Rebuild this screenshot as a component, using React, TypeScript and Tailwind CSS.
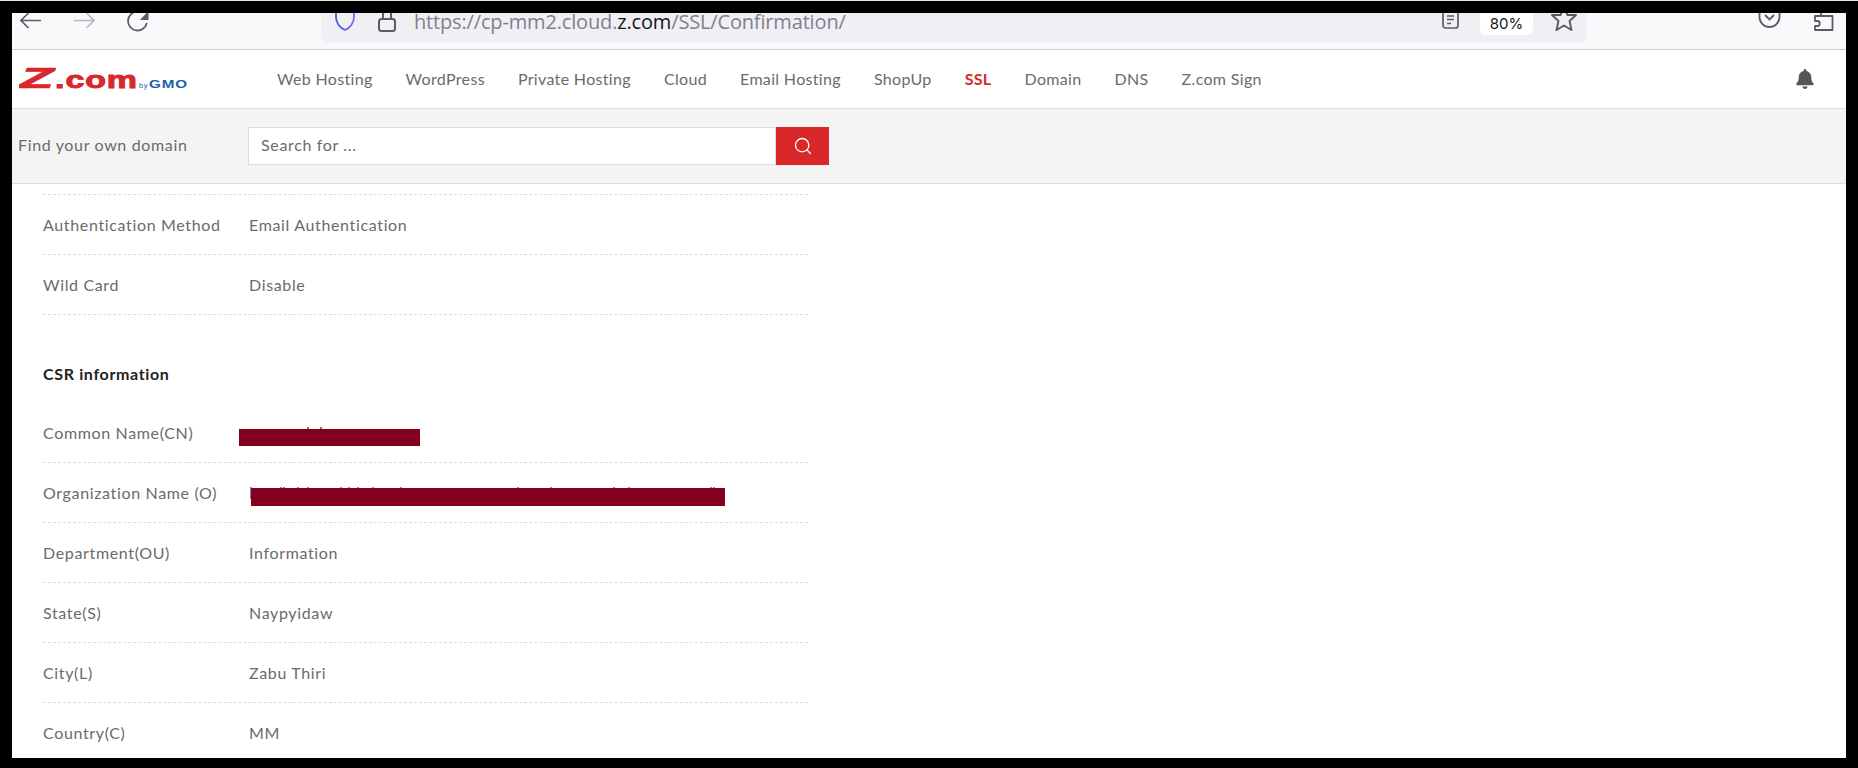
import React from "react";
import { Search } from "lucide-react";
import { FaBell } from "react-icons/fa";

const navItems = [
  "Web Hosting",
  "WordPress",
  "Private Hosting",
  "Cloud",
  "Email Hosting",
  "ShopUp",
  "SSL",
  "Domain",
  "DNS",
  "Z.com Sign",
];

const orderTicks = [90, 100, 140, 170, 270, 295, 320, 365, 450, 800, 900, 1090, 1133, 1380, 1390];

const Row: React.FC<{ label: string; value?: string; children?: React.ReactNode }> = ({ label, value, children }) => (
  <div className="relative flex h-[60px] w-[765px] shrink-0 items-center border-b border-dashed border-[#dddddd]">
    <span className="w-[206px] shrink-0">{label}</span>
    <span>{value}</span>
    {children}
  </div>
);

const BrowserBar = () => (
  <div className="flex h-[37px] shrink-0 items-start overflow-hidden border-b border-[#cccccc] bg-[#f9f9fb]">
    <svg className="ml-2 shrink-0" width="21" height="30" viewBox="0 0 21 30" fill="none" stroke="#5b5b66" strokeWidth="1.6">
      <path d="M21 7.5H1M8.5 0L1 7.5L8.5 15" />
    </svg>
    <svg className="ml-[33px] shrink-0" width="21" height="30" viewBox="0 0 21 30" fill="none" stroke="#b8b8be" strokeWidth="1.6">
      <path d="M0 7.5H20M12.5 0L20 7.5L12.5 15" />
    </svg>
    <svg className="ml-[32px] shrink-0" width="22" height="30" viewBox="0 0 22 30" fill="none" stroke="#5b5b66" strokeWidth="1.8">
      <path d="M19.8 10A9.5 9.5 0 1 1 10.5 -1.5" />
      <path d="M13 7H21.5V-2Z" fill="#5b5b66" stroke="none" />
    </svg>
    <div className="ml-[172px] flex h-[30px] w-[1266px] shrink-0 items-start rounded-b-lg bg-[#f0eff4]">
      <svg className="ml-[13px] shrink-0" width="22" height="30" viewBox="0 0 22 30" fill="none" strokeWidth="1.8">
        <defs>
          <linearGradient id="shield" x1="0" x2="1" y1="0" y2="0">
            <stop offset="0" stopColor="#3a5ce0" />
            <stop offset="1" stopColor="#8f63e6" />
          </linearGradient>
        </defs>
        <path d="M2 -5V4C2 10 6 15 11 17C16 15 20 10 20 4V-5" stroke="url(#shield)" />
      </svg>
      <svg className="ml-[22px] shrink-0" width="18" height="30" viewBox="0 0 18 30" fill="none" stroke="#5b5b66" strokeWidth="2">
        <rect x="1" y="6" width="16" height="12" rx="2.5" />
        <path d="M5 6V-4M13 6V-4" />
      </svg>
      <div className="-mt-[6px] ml-[18px] h-[30px] whitespace-nowrap font-['Open_Sans',sans-serif] text-[20px] leading-[30px] tracking-[-0.16px] text-[#80808e]">
        https://cp-mm2.cloud.<span className="text-[#15141a]">z.com</span>/SSL/Confirmation/
      </div>
      <svg className="ml-auto shrink-0" width="17" height="30" viewBox="0 0 17 30" fill="none" stroke="#5b5b66" strokeWidth="1.7">
        <path d="M1 -5V12.5A2.5 2.5 0 0 0 3.5 15H13.5A2.5 2.5 0 0 0 16 12.5V-5" />
        <path d="M5 3H12M5 6.5H12M5 10.5H9" />
      </svg>
      <div className="ml-[21px] flex h-[22px] w-[53px] shrink-0 items-center justify-center rounded-b-md bg-white font-['Inter',sans-serif] text-[15px] tracking-normal text-[#15141a]">
        80%
      </div>
      <svg className="ml-[18px] shrink-0" width="26" height="30" viewBox="0 0 26 30" fill="none" stroke="#5b5b66" strokeWidth="1.9" strokeLinejoin="round">
        <path d="M13 -6L16.5 2H25L18.5 8L20.5 17L13 12.5L5.5 17L7.5 8L1 2H9.5Z" />
      </svg>
      <div className="w-[10px] shrink-0" />
    </div>
    <svg className="ml-[171px] shrink-0" width="23" height="30" viewBox="0 0 23 30" fill="none" stroke="#5b5b66" strokeWidth="1.8">
      <path d="M1.5 -5V4A10 10 0 0 0 21.5 4V-5" />
      <path d="M7 2L11.5 6.5L16 2" />
    </svg>
    <svg className="ml-[33px] shrink-0" width="20" height="30" viewBox="0 0 20 30" fill="none" stroke="#5b5b66" strokeWidth="1.8" strokeLinejoin="round">
      <path d="M7 -2V3H18.5V17H1V13H3.5C6.5 13 6.5 8 3.5 8H1V3H7" />
    </svg>
  </div>
);

const Logo = () => (
  <svg className="ml-[7px] shrink-0" width="170" height="26" viewBox="0 0 170 26">
    <text x="0" y="22" fontFamily="'Liberation Sans', sans-serif" fontWeight="700" fontStyle="italic" fontSize="29" fill="#d9272a" stroke="#d9272a" strokeWidth="0.7" textLength="36" lengthAdjust="spacingAndGlyphs">
      Z
    </text>
    <text x="36" y="22" fontFamily="'Liberation Sans', sans-serif" fontWeight="700" fontSize="23" fill="#d9272a" stroke="#d9272a" strokeWidth="0.9" textLength="83" lengthAdjust="spacingAndGlyphs">
      .com
    </text>
    <text x="120" y="22" fontFamily="'Liberation Sans', sans-serif" fontSize="8" fill="#1a5fa8" textLength="9" lengthAdjust="spacingAndGlyphs">
      by
    </text>
    <text x="130" y="22" fontFamily="'Liberation Sans', sans-serif" fontWeight="700" fontSize="11" fill="#1a5fa8" textLength="39" lengthAdjust="spacingAndGlyphs">
      GMO
    </text>
  </svg>
);

export default function App() {
  return (
    <div className="flex h-[768px] w-full flex-col overflow-hidden bg-black font-['Lato',sans-serif] text-[16px] tracking-[0.65px] text-[#6b6b6b]">
      <div className="h-px shrink-0 bg-[#e8e8e8]" />
      <div className="mx-3 mb-[10px] mt-3 flex min-h-0 flex-1 flex-col overflow-hidden bg-white">
        <BrowserBar />
        <div className="flex h-[59px] shrink-0 items-center border-b border-[#dddddd] bg-white">
          <Logo />
          <nav className="ml-[88px] flex gap-[33px] tracking-[0.33px]">
            {navItems.map((item) => (
              <span key={item} className={item === "SSL" ? "font-bold text-[#d9272a]" : ""}>
                {item}
              </span>
            ))}
          </nav>
          <FaBell className="ml-auto mr-[31px] text-[20px] text-[#555555]" />
        </div>
        <div className="flex h-[75px] shrink-0 items-center border-b border-[#dddddd] bg-[#f4f4f5]">
          <span className="ml-[6px] w-[230px] shrink-0 pb-[2px]">Find your own domain</span>
          <div className="flex h-[38px] w-[581px] shrink-0">
            <div className="flex flex-1 items-center border border-[#dddddd] bg-white pb-[2px] pl-3">Search for ...</div>
            <div className="flex w-[53px] items-center justify-center bg-[#d9272a]">
              <Search className="text-white" size={20} strokeWidth={1.6} />
            </div>
          </div>
        </div>
        <div className="ml-[31px] flex min-h-0 flex-1 flex-col overflow-hidden">
          <div className="h-[11px] w-[765px] shrink-0 border-b border-dashed border-[#dddddd]" />
          <Row label="Authentication Method" value="Email Authentication" />
          <Row label="Wild Card" value="Disable" />
          <div className="flex h-[88px] shrink-0 items-center pt-[29px] font-bold text-[#222222]">CSR information</div>
          <Row label="Common Name(CN)">
            <span className="absolute left-[264px] top-[24px] h-[3px] w-[2px] bg-[#777777]" />
            <span className="absolute left-[277px] top-[24px] h-[3px] w-[2px] bg-[#777777]" />
            <span className="absolute left-[196px] top-[26px] h-[17px] w-[181px] bg-[#85001f]" />
          </Row>
          <Row label="Organization Name (O)">
            <span className="absolute left-[207px] top-[24px] h-[12px] w-[2px] bg-[#8a8a8a]" />
            {orderTicks.map((tick) => (
              <span key={tick} className="absolute top-[24px] h-[2px] w-[2px] bg-[#888888]" style={{ left: 207 + tick / 3 }} />
            ))}
            <span className="absolute left-[208px] top-[25px] h-[18px] w-[474px] bg-[#85001f]" />
          </Row>
          <Row label="Department(OU)" value="Information" />
          <Row label="State(S)" value="Naypyidaw" />
          <Row label="City(L)" value="Zabu Thiri" />
          <Row label="Country(C)" value="MM" />
        </div>
      </div>
    </div>
  );
}
